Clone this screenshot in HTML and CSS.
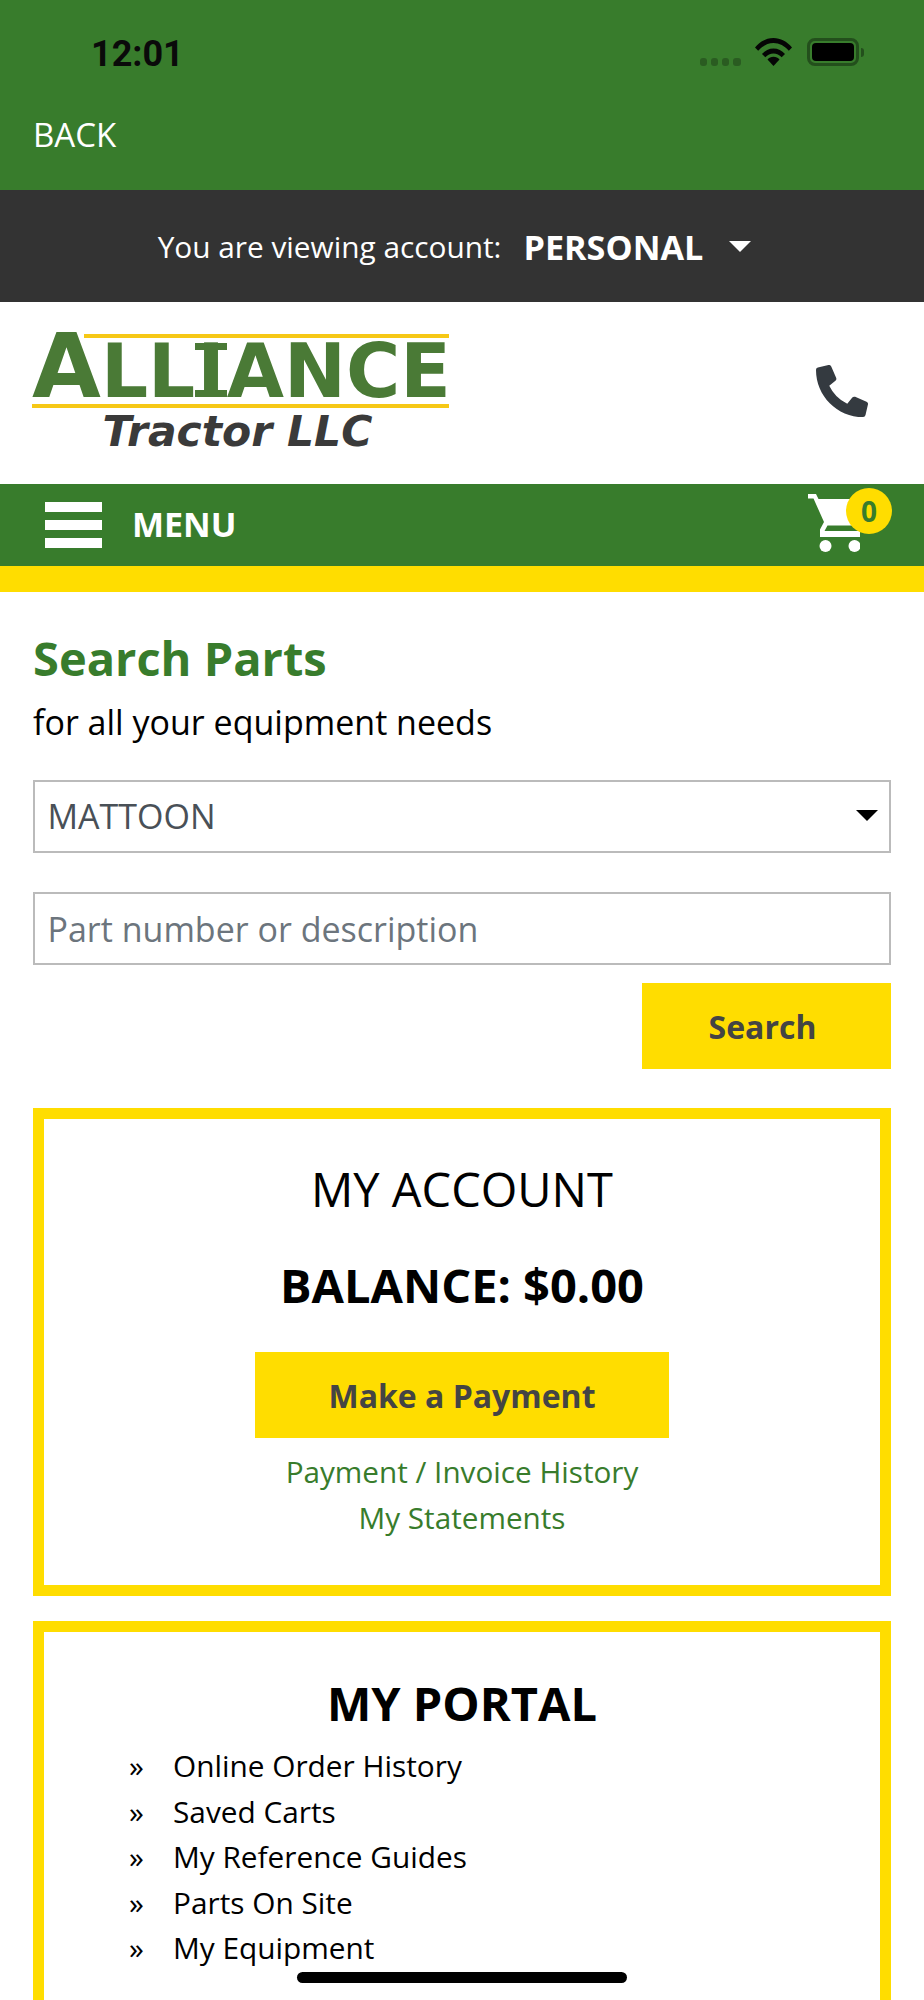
FILE: index.html
```html
<!DOCTYPE html>
<html lang="en">
<head>
<meta charset="utf-8">
<title>Alliance Tractor LLC</title>
<link rel="stylesheet" href="styles.css">
</head>
<body>
<div class="screen">
  <header class="top">
    <div class="status">
      <span class="time">12:01</span>
      <div class="status-icons">
        <svg class="signal" viewBox="0 0 41 8"><rect x="0" y="0" width="7" height="8" rx="3"/><rect x="11" y="0" width="7" height="8" rx="3"/><rect x="22" y="0" width="7" height="8" rx="3"/><rect x="33" y="0" width="8" height="8" rx="3"/></svg>
        <svg class="wifi" viewBox="0 0 37 28"><path d="M0 9.5C5 3.5 11.500 0 18.500 0S32 3.500 37 9.500l-3.200 3.300C29.700 8 24.300 5 18.500 5S7.300 8 3.200 12.800z"/><path d="M7 16c3-3.500 7-5.500 11.500-5.500S27 12.500 30 16l-3.300 3.300C24.500 16.800 21.600 15.400 18.500 15.400s-6 1.400-8.200 3.900z"/><path d="M18.500 28l-6-6.500c1.500-1.700 3.600-2.700 6-2.700s4.500 1 6 2.700z"/></svg>
        <div class="battery"><span class="battery-fill"></span></div>
      </div>
    </div>
    <a class="back">BACK</a>
  </header>

  <div class="account-bar">
    <span class="account-label">You are viewing account:</span>
    <strong class="account-name">PERSONAL</strong>
    <span class="caret"></span>
  </div>

  <div class="brand">
    <div class="logo">
      <div class="logo-main"><span class="logo-cap">A</span>LL<span class="logo-i">I</span>ANCE</div>
      <div class="logo-sub">Tractor LLC</div>
    </div>
    <svg class="phone-icon" viewBox="0 0 512 512"><path d="M497.390 361.800l-112-48a24 24 0 0 0-28 6.900l-49.600 60.600A370.660 370.660 0 0 1 130.600 204.110l60.600-49.600a23.940 23.940 0 0 0 6.900-28l-48-112A24.160 24.160 0 0 0 122.600.610l-104 24A24 24 0 0 0 0 48c0 256.500 207.900 464 464 464a24 24 0 0 0 23.400-18.600l24-104a24.290 24.290 0 0 0-14.010-27.600z"/></svg>
  </div>

  <nav class="nav">
    <div class="burger"><span></span><span></span><span></span></div>
    <span class="menu-label">MENU</span>
    <div class="cart">
      <svg class="cart-icon" viewBox="0 0 52 58"><path d="M0 0h8l2.500 5H52v26.500H19.500L16.500 37H52v6H12v-7.500l4-7.500L5.500 4.500H0z"/><circle cx="17.500" cy="52" r="6"/><circle cx="46.500" cy="52" r="6"/></svg>
      <span class="badge">0</span>
    </div>
  </nav>

  <main class="content">
    <h1 class="title">Search Parts</h1>
    <p class="subtitle">for all your equipment needs</p>

    <div class="select"><span>MATTOON</span><span class="select-caret"></span></div>
    <input class="input" type="text" placeholder="Part number or description">
    <div class="search-row"><button class="btn btn-search">Search</button></div>

    <section class="card card-account">
      <h2 class="card-title">MY ACCOUNT</h2>
      <div class="balance">BALANCE: $0.00</div>
      <button class="btn btn-pay">Make a Payment</button>
      <a class="link first">Payment / Invoice History</a>
      <a class="link">My Statements</a>
    </section>

    <section class="card card-portal">
      <h2 class="portal-title">MY PORTAL</h2>
      <ul class="portal-list">
        <li>Online Order History</li>
        <li>Saved Carts</li>
        <li>My Reference Guides</li>
        <li>Parts On Site</li>
        <li>My Equipment</li>
      </ul>
    </section>
  </main>

  <div class="home-indicator"></div>
</div>
</body>
</html>
```

FILE: styles.css
```css
* { box-sizing: border-box; }
html, body { margin: 0; padding: 0; }
body { font-family: "Open Sans", sans-serif; background: #fff; color: #000; }
.screen { position: relative; width: 924px; height: 2000px; overflow: hidden; }

.top { height: 190px; background: #387c2c; color: #fff; padding: 38px 65px 0 33px; }
.status { display: flex; justify-content: space-between; align-items: flex-start; height: 74px; padding-left: 58px; }
.time { font-family: Roboto, "Liberation Sans", sans-serif; font-weight: 700; font-size: 36px; line-height: 32px; color: #0a0a0a; }
.status-icons { display: flex; align-items: flex-start; gap: 15px; }
.signal { width: 41px; height: 8px; margin-top: 20px; margin-right: -1px; fill: #2a5c21; }
.wifi { width: 37px; height: 28px; fill: #050505; }
.battery { position: relative; width: 52px; height: 28px; border: 3px solid #234f1c; border-radius: 8px; padding: 2px; }
.battery::after { content: ""; position: absolute; right: -8px; top: 7px; width: 3px; height: 9px; background: #234f1c; border-radius: 0 3px 3px 0; }
.battery-fill { display: block; height: 100%; background: #000; border-radius: 4px; }
.back { display: block; font-size: 33px; line-height: 45px; }

.account-bar { height: 112px; background: #333; color: #fff; display: flex; align-items: center; justify-content: center; padding-right: 15px; }
.account-label { font-size: 29.800px; }
.account-name { font-size: 34.200px; font-weight: 700; margin-left: 22px; }
.caret { width: 0; height: 0; border-left: 11px solid transparent; border-right: 11px solid transparent; border-top: 11px solid #fff; margin-left: 26px; }

.brand { height: 182px; display: flex; justify-content: space-between; align-items: flex-start; padding: 30px 56px 0 32px; }
.logo { position: relative; width: 417px; font-family: "DejaVu Sans", sans-serif; font-weight: 700; text-align: center; }
.logo::before { content: ""; position: absolute; left: 52px; right: 0; top: 2px; height: 4px; background: #f6c816; }
.logo-main { color: #4a7a36; font-size: 74px; line-height: 68px; height: 76px; white-space: nowrap; text-align: left; border-bottom: 4px solid #f6c816; }
.logo-cap { font-size: 89px; }
.logo-i { position: relative; margin: 0 2px; }
.logo-i::before, .logo-i::after { content: ""; position: absolute; left: -2px; right: -2px; height: 7px; background: #4a7a36; }
.logo-i::before { top: 15px; }
.logo-i::after { top: 62px; }
.logo-sub { color: #3a3a3a; font-style: italic; font-size: 42.500px; line-height: 48px; padding-right: 6px; }
.phone-icon { width: 52px; height: 52px; margin-top: 33px; fill: #343a40; }

.nav { position: relative; height: 108px; background: #387c2c; border-bottom: 26px solid #ffdd00; display: flex; align-items: center; padding-left: 45px; color: #fff; }
.burger { width: 57px; display: flex; flex-direction: column; gap: 8px; }
.burger span { display: block; height: 10px; background: #fff; }
.menu-label { font-size: 34px; font-weight: 700; margin-left: 30px; margin-bottom: 2px; }
.cart { position: absolute; left: 808px; top: 10px; width: 84px; height: 58px; }
.cart-icon { display: block; width: 52px; height: 58px; fill: #fff; }
.badge { position: absolute; left: 38px; top: -6px; width: 46px; height: 46px; border-radius: 50%; background: #ffdd00; color: #387c2c; font-size: 28px; font-weight: 700; line-height: 46px; text-align: center; }

.content { padding: 36px 33px 0; }
.title { margin: 0; font-size: 47px; line-height: 60px; font-weight: 700; color: #387c2c; }
.subtitle { margin: 9px 0 33px; font-size: 34px; line-height: 50px; }
.select, .input { display: flex; width: 100%; height: 73px; border: 2.500px solid #bbb; background: #fff; font-family: "Open Sans", sans-serif; font-size: 34px; color: #495057; padding: 0 12.500px; border-radius: 0; outline: 0; }
.select { align-items: center; justify-content: space-between; margin-bottom: 39px; padding-bottom: 2px; }
.select-caret { width: 0; height: 0; border-left: 11px solid transparent; border-right: 11px solid transparent; border-top: 11px solid #000; margin-right: -1px; }
.input::placeholder { color: #6c757d; opacity: 1; }
.search-row { display: flex; justify-content: flex-end; margin-top: 18px; }
.btn { display: block; border: 0; background: #ffdd00; color: #444; font-family: "Open Sans", sans-serif; font-size: 32px; font-weight: 700; padding: 0; }
.btn-search { width: 249px; height: 86px; padding-right: 8px; }

.card { border: 11px solid #ffdd00; text-align: center; }
.card-account { height: 488px; margin-top: 39px; padding-top: 38px; }
.card-title { margin: 0; font-size: 47px; font-weight: 400; line-height: 64px; }
.balance { font-size: 47px; font-weight: 700; line-height: 64px; margin-top: 32px; }
.btn-pay { width: 414px; height: 86px; margin: 35px auto 11px; }
.link { display: block; color: #387c2c; font-size: 29.700px; line-height: 45.500px; }

.card-portal { margin-top: 25px; height: 700px; padding-top: 40px; }
.portal-title { margin: 0; font-size: 47px; line-height: 62px; font-weight: 700; }
.portal-list { list-style: none; margin: 0; padding: 9px 0 0 85px; text-align: left; font-size: 29.800px; line-height: 45.500px; }
.portal-list li { display: flex; }
.portal-list li::before { content: "»"; width: 44px; }

.home-indicator { position: absolute; left: 297px; top: 1972px; width: 330px; height: 11px; border-radius: 6px; background: #000; }
```
